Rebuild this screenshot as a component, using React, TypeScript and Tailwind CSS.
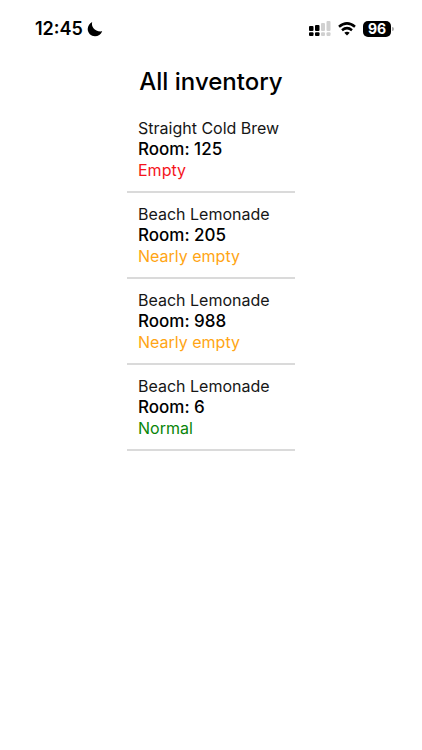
const items = [
  { name: "Straight Cold Brew", room: 125, status: "Empty", color: "text-[#f5141c]" },
  { name: "Beach Lemonade", room: 205, status: "Nearly empty", color: "text-[#ffa514]" },
  { name: "Beach Lemonade", room: 988, status: "Nearly empty", color: "text-[#ffa514]" },
  { name: "Beach Lemonade", room: 6, status: "Normal", color: "text-[#088508]" },
];

function StatusBar() {
  return (
    <header className="flex h-[58px] items-center justify-between pr-7 pl-[35px]">
      <div className="flex items-center gap-1">
        <time className="text-lg font-semibold">12:45</time>
        <svg width="16" height="16" viewBox="0 0 16 16" aria-label="Do not disturb">
          <path d="M5.2 .9C3.8 5.4 7.8 11.2 15.2 10.300C13.900 13.500 11.200 15.300 8 15.300C4 15.300 .7 12.200 .7 8.100C.7 4.900 2.500 2.200 5.200 .9Z" />
        </svg>
      </div>
      <div className="flex items-center gap-[7px]">
        <svg width="22" height="16" viewBox="0 0 22 16" aria-label="Signal">
          <rect x="0" y="5" width="4.500" height="5" rx="1" />
          <rect x="0" y="11.200" width="4.500" height="3.800" rx="1" />
          <rect x="6" y="4" width="4.500" height="6" rx="1" />
          <rect x="6" y="11.200" width="4.500" height="3.800" rx="1" />
          <rect x="12" y="2" width="4" height="8" rx="1" fill="#d0d0d0" />
          <rect x="12" y="11.200" width="4" height="3.800" rx="1" fill="#d0d0d0" />
          <rect x="17.500" y="0" width="4" height="10" rx="1" fill="#d0d0d0" />
          <rect x="17.500" y="11.200" width="4" height="3.800" rx="1" fill="#d0d0d0" />
        </svg>
        <svg width="18" height="14" viewBox="0 0 18 14" aria-label="Wi-Fi">
          <path d="M1 4.800Q9-2 17 4.800M4 8.200Q9 4 14 8.200" fill="none" stroke="#000" strokeWidth="2.500" />
          <path d="M6.300 10.800Q9 8.600 11.700 10.800L9 13.600Z" />
        </svg>
        <div className="flex items-center gap-px">
          <span className="flex h-4 w-7 items-center justify-center rounded-[5px] bg-black text-sm font-bold text-white">96</span>
          <span className="h-1 w-0.5 rounded-r bg-[#aaa]" />
        </div>
      </div>
    </header>
  );
}

export default function App() {
  return (
    <div className="min-h-screen bg-white font-['Inter',sans-serif] text-black">
      <StatusBar />
      <main className="flex flex-col items-center">
        <h1 className="mt-1.5 text-2xl leading-9 font-medium">All inventory</h1>
        <ul className="mt-2 min-w-[168px]">
          {items.map((item) => (
            <li key={item.room} className="mb-px border-b-2 border-[#dadada] px-[11px] py-2.5 text-base leading-[21px]">
              <p className="text-[#161616]">{item.name}</p>
              <p className="text-[17px] leading-[21px] font-medium">Room: {item.room}</p>
              <p className={item.color}>{item.status}</p>
            </li>
          ))}
        </ul>
      </main>
    </div>
  );
}
